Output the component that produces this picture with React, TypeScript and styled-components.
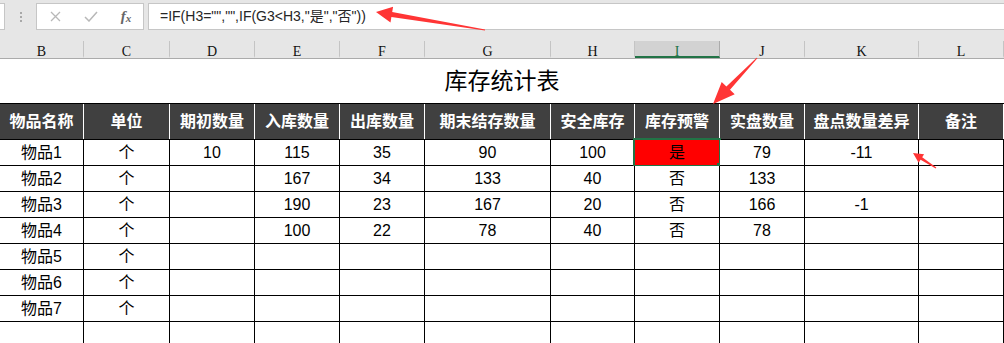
import styled, { createGlobalStyle } from 'styled-components'

const COLS = '84px 86px 85px 85px 85px 126px 84px 85px 85px 114px 85px'
const LETTERS = ['B', 'C', 'D', 'E', 'F', 'G', 'H', 'I', 'J', 'K', 'L']
const SELECTED_COL = 'I'
const HEADS = ['物品名称', '单位', '期初数量', '入库数量', '出库数量', '期末结存数量', '安全库存', '库存预警', '实盘数量', '盘点数量差异', '备注']

const ROWS: string[][] = [
  ['物品1', '个', '10', '115', '35', '90', '100', '是', '79', '-11', ''],
  ['物品2', '个', '', '167', '34', '133', '40', '否', '133', '', ''],
  ['物品3', '个', '', '190', '23', '167', '20', '否', '166', '-1', ''],
  ['物品4', '个', '', '100', '22', '78', '40', '否', '78', '', ''],
  ['物品5', '个', '', '', '', '', '', '', '', '', ''],
  ['物品6', '个', '', '', '', '', '', '', '', '', ''],
  ['物品7', '个', '', '', '', '', '', '', '', '', ''],
  ['', '', '', '', '', '', '', '', '', '', ''],
]

// arrows drawn over the sheet: tail -> tip
const ARROWS = [
  { x1: 485, y1: 30, x2: 376, y2: 12, head: 16, half: 8, w0: 1, w1: 5 },
  { x1: 757, y1: 58, x2: 713, y2: 104, head: 22, half: 9, w0: 1, w1: 5 },
  { x1: 936, y1: 168, x2: 913, y2: 153, head: 10, half: 5, w0: 1, w1: 3 },
]

const arrowPoints = (a: typeof ARROWS[number]) => {
  const dx = a.x2 - a.x1
  const dy = a.y2 - a.y1
  const len = Math.hypot(dx, dy)
  const ux = dx / len
  const uy = dy / len
  const nx = -uy
  const ny = ux
  const bx = a.x2 - ux * a.head
  const by = a.y2 - uy * a.head
  const p = (x: number, y: number) => `${x.toFixed(1)},${y.toFixed(1)}`
  return [
    p(a.x1 + nx * a.w0 / 2, a.y1 + ny * a.w0 / 2),
    p(bx + nx * a.w1 / 2, by + ny * a.w1 / 2),
    p(bx + nx * a.half, by + ny * a.half),
    p(a.x2, a.y2),
    p(bx - nx * a.half, by - ny * a.half),
    p(bx - nx * a.w1 / 2, by - ny * a.w1 / 2),
    p(a.x1 - nx * a.w0 / 2, a.y1 - ny * a.w0 / 2),
  ].join(' ')
}

const App = () => {
  return <Page>
    <GlobalStyle/>
    <FormulaBar>
      <NameBox/>
      <Grip><Dot/><Dot/><Dot/></Grip>
      <ButtonGroup>
        <IconSlot>
          <svg width="11" height="11" viewBox="0 0 11 11">
            <path d="M1 1L10 10M10 1L1 10" stroke="#b8b8b8" strokeWidth="1.3" fill="none"/>
          </svg>
        </IconSlot>
        <IconSlot>
          <svg width="14" height="11" viewBox="0 0 14 11">
            <path d="M1 6L5 10L13 1" stroke="#b8b8b8" strokeWidth="1.5" fill="none"/>
          </svg>
        </IconSlot>
        <IconSlot><Fx>f<sub>x</sub></Fx></IconSlot>
      </ButtonGroup>
      <FormulaInput>=IF(H3="","",IF(G3&lt;H3,"是","否"))</FormulaInput>
    </FormulaBar>
    <ColumnHeaders>
      {LETTERS.map(l => <ColLetter key={l} $active={l === SELECTED_COL}>{l}</ColLetter>)}
    </ColumnHeaders>
    <Sheet>
      <TitleRow>库存统计表</TitleRow>
      <HeadRow>
        {HEADS.map(h => <HeadCell key={h}>{h}</HeadCell>)}
      </HeadRow>
      {ROWS.map((row, r) => <DataRow key={r}>
        {row.map((v, c) => {
          const warn = r === 0 && c === 7
          return <Cell key={c} $warn={warn}>
            {v}
            {warn && <Selection><Handle/></Selection>}
          </Cell>
        })}
      </DataRow>)}
    </Sheet>
    <Overlay width="1004" height="343" viewBox="0 0 1004 343">
      {ARROWS.map((a, i) => <polygon key={i} points={arrowPoints(a)} fill="#ff3535"/>)}
    </Overlay>
  </Page>
}

const GlobalStyle = createGlobalStyle`
  html, body {
    margin: 0;
    padding: 0;
    background: #fff;
  }
  body {
    font-family: "Liberation Sans", "Noto Sans CJK SC", sans-serif;
  }
`

const Page = styled.div`
  position: relative;
  width: 1004px;
  height: 343px;
  overflow: hidden;
  background: #fff;
`

const FormulaBar = styled.div`
  display: flex;
  height: 41px;
  padding: 3px 0 11px;
  box-sizing: border-box;
  background: #e6e6e6;
`

const NameBox = styled.div`
  width: 5px;
  background: #fff;
  border: 1px solid #c6c6c6;
  border-left: none;
  box-sizing: border-box;
`

const Grip = styled.div`
  width: 31px;
  display: flex;
  flex-direction: column;
  align-items: center;
  justify-content: center;
  gap: 2px;
`

const Dot = styled.span`
  width: 2px;
  height: 2px;
  background: #a8a8a8;
`

const ButtonGroup = styled.div`
  width: 108px;
  display: grid;
  grid-template-columns: 36px 36px 34px;
  align-items: center;
  background: #fff;
  border: 1px solid #c6c6c6;
  box-sizing: border-box;
`

const IconSlot = styled.div`
  display: flex;
  align-items: center;
  justify-content: center;
`

const Fx = styled.span`
  font-family: "Liberation Serif", serif;
  font-style: italic;
  font-weight: bold;
  font-size: 15px;
  color: #666;
  line-height: 1;
  sub {
    font-size: 11px;
    vertical-align: -1px;
  }
`

const FormulaInput = styled.div`
  flex: 1;
  margin-left: 4px;
  padding-left: 11px;
  background: #fff;
  border: 1px solid #c6c6c6;
  border-right: none;
  box-sizing: border-box;
  font-size: 14px;
  line-height: 25px;
  color: #262626;
  white-space: nowrap;
`

const ColumnHeaders = styled.div`
  display: grid;
  grid-template-columns: ${COLS};
  height: 18px;
  background: #e6e6e6;
  border-bottom: 1px solid #ababab;
  box-sizing: border-box;
`

const ColLetter = styled.div<{ $active?: boolean }>`
  height: 17px;
  padding-top: 4px;
  box-sizing: border-box;
  line-height: 13px;
  text-align: center;
  font-family: "Liberation Serif", serif;
  font-size: 14px;
  color: ${p => p.$active ? '#217346' : '#111'};
  background: ${p => p.$active ? '#d2d2d2' : 'transparent'};
  border-right: 1px solid ${p => p.$active ? '#ababab' : '#c4c4c4'};
  border-bottom: 2px solid ${p => p.$active ? '#217346' : 'transparent'};
  margin-bottom: -1px;
`

const Sheet = styled.div`
  display: flex;
  flex-direction: column;
`

const TitleRow = styled.div`
  height: 44px;
  line-height: 44px;
  text-align: center;
  font-size: 23px;
  color: #000;
`

const HeadRow = styled.div`
  display: grid;
  grid-template-columns: ${COLS};
  height: 37px;
  background: #404040;
  border-top: 1px solid #000;
  border-bottom: 1px solid #000;
  box-sizing: border-box;
`

const HeadCell = styled.div`
  border-right: 1px solid #fff;
  text-align: center;
  line-height: 35px;
  font-size: 16px;
  font-weight: bold;
  color: #fff;
  white-space: nowrap;
`

const DataRow = styled.div`
  display: grid;
  grid-template-columns: ${COLS};
  height: 26px;
`

const Cell = styled.div<{ $warn?: boolean }>`
  position: relative;
  border-right: 1px solid #000;
  border-bottom: 1px solid #000;
  background: ${p => p.$warn ? '#ff0000' : '#fff'};
  text-align: center;
  line-height: 25px;
  font-size: 16px;
  color: #000;
  white-space: nowrap;
`

const Selection = styled.div`
  position: absolute;
  left: -2px;
  top: -2px;
  right: -2px;
  bottom: -2px;
  border: 2px solid #217346;
  box-sizing: border-box;
  pointer-events: none;
`

const Handle = styled.span`
  position: absolute;
  right: -4px;
  bottom: -4px;
  width: 6px;
  height: 6px;
  background: #217346;
`

const Overlay = styled.svg`
  position: absolute;
  left: 0;
  top: 0;
  pointer-events: none;
`

export default App
